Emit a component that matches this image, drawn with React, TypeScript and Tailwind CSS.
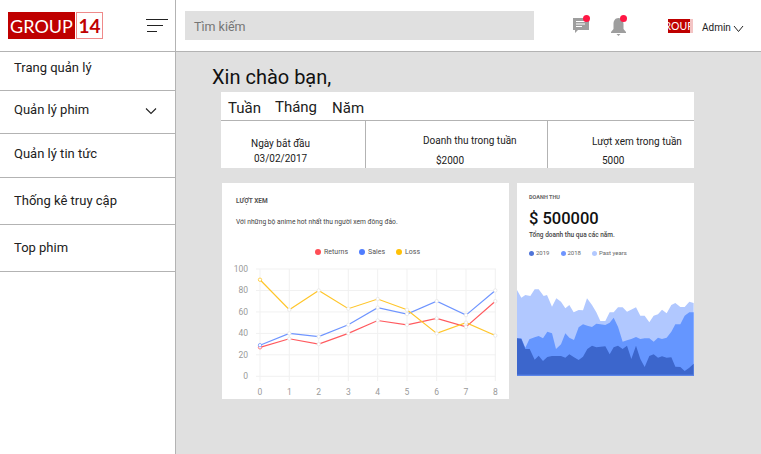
const light = "15,45 28,68 40,60 55,63 68,43 80,43 95,63 105,60 120,95 133,70 147,80 160,100 172,90 185,112 200,105 213,106 225,70 240,90 253,112 265,138 280,138 293,112 305,112 318,97 332,97 345,110 372,97 385,122 398,122 412,142 425,122 438,118 450,104 464,115 478,90 490,84 505,96 518,96 532,80 545,84";
const mid = "15,190 28,190 40,218 52,193 68,187 80,183 93,190 106,170 120,175 132,222 147,208 160,175 172,188 186,195 200,157 213,148 226,152 240,156 253,146 265,148 280,150 293,143 305,128 318,155 332,200 345,196 358,192 372,186 385,192 398,190 412,190 425,200 438,188 450,192 464,188 478,170 490,148 505,148 518,122 532,112 545,112";
const dark = "15,190 28,192 40,222 53,222 68,254 80,242 93,258 106,246 120,243 147,243 160,248 172,238 186,247 200,255 213,245 226,222 240,212 253,217 280,214 293,238 305,217 318,212 332,222 345,212 358,252 372,212 385,252 398,276 412,243 425,238 438,248 450,244 464,248 478,247 490,275 505,276 518,288 532,278 545,266";

const xs = [38, 67.3, 96.7, 126.3, 155.7, 185, 214.7, 244, 273.3];
const yOf = (v: number) => 109.3 - v * 1.073;
const series = [
  { c: "#ff5a5f", d: [27, 35, 30, 40, 52, 48, 54, 46, 70] },
  { c: "#6f95ff", d: [29, 40, 37, 48, 64, 58, 70, 57, 80] },
  { c: "#ffc62b", d: [90, 62, 80, 63, 72, 62, 40, 50, 38] },
];

function Logo() {
  return (
    <div className="flex h-[27px] items-stretch" style={{ fontFamily: "Lato, sans-serif" }}>
      <div className="flex w-[67px] items-center justify-center bg-[#bf0000] text-[18px] leading-none text-white">GROUP</div>
      <div className="ml-px flex w-[27px] items-center justify-center border border-[#ef8a8a] bg-white text-[19px] font-bold leading-none text-[#bf0000]">14</div>
    </div>
  );
}

function NavRow({ label, h, pt, chevron }: { label: string; h: string; pt: string; chevron?: boolean }) {
  return (
    <div className={`flex items-start justify-between border-b border-[#b3b3b3] pl-[14px] pr-[18px] text-[13px] leading-[20px] text-[#212121] ${h} ${pt}`}>
      <span>{label}</span>
      {chevron && (
        <svg width="12" height="8" viewBox="0 0 12 8" className="mt-[7px]" fill="none" stroke="#222" strokeWidth="1.1"><path d="M1 1.5 6 6.5 11 1.5" /></svg>
      )}
    </div>
  );
}

function LineChart() {
  return (
    <svg width="287" height="132" viewBox="0 0 287 132" className="block overflow-visible" style={{ fontFamily: "Roboto, sans-serif" }}>
      {[0, 20, 40, 60, 80, 100].map((v) => (
        <g key={v}>
          <line x1="34" x2="274" y1={yOf(v)} y2={yOf(v)} stroke="#f1f1f1" />
          <text x="26" y={yOf(v) + 3} fontSize="8.5" fill="#9a9a9a" textAnchor="end">{v}</text>
        </g>
      ))}
      {xs.map((x, i) => (
        <g key={i}>
          <line x1={x} x2={x} y1="2" y2="114" stroke="#f1f1f1" />
          <text x={x} y="128" fontSize="8.5" fill="#9a9a9a" textAnchor="middle">{i}</text>
        </g>
      ))}
      {series.map((s) => (
        <g key={s.c}>
          <polyline points={s.d.map((v, i) => `${xs[i]},${yOf(v)}`).join(" ")} fill="none" stroke={s.c} strokeWidth="1.2" />
          {s.d.map((v, i) => (
            <circle key={i} cx={xs[i]} cy={yOf(v)} r="1.7" fill="#fff" stroke={i === 0 ? s.c : "#e6e6e6"} strokeWidth="0.8" />
          ))}
        </g>
      ))}
    </svg>
  );
}

function Legend({ c, t, gap, dot }: { c: string; t: string; gap: string; dot: string }) {
  return (
    <span className={`flex items-center ${gap}`}>
      <span className={`rounded-full ${dot}`} style={{ background: c }} />
      <span>{t}</span>
    </span>
  );
}

export default function App() {
  return (
    <div className="flex h-[454px] w-[761px] overflow-hidden bg-white" style={{ fontFamily: "Roboto, sans-serif" }}>
      <aside className="h-full w-[176px] shrink-0 border-r border-[#b3b3b3] bg-white">
        <div className="flex h-[52px] items-center justify-between border-b border-[#b3b3b3] pl-2 pr-[7px]">
          <Logo />
          <svg width="22" height="14" viewBox="0 0 22 14" fill="none" stroke="#222" strokeWidth="1"><path d="M0 .5H22M1 6.5H17M1 12.5H11" /></svg>
        </div>
        <NavRow label="Trang quản lý" h="h-[39px]" pt="pt-[6px]" />
        <NavRow label="Quản lý phim" h="h-[43px]" pt="pt-[9px]" chevron />
        <NavRow label="Quản lý tin tức" h="h-[44px]" pt="pt-[10px]" />
        <NavRow label="Thống kê truy cập" h="h-[47px]" pt="pt-[13px]" />
        <NavRow label="Top phim" h="h-[47px]" pt="pt-[13px]" />
      </aside>
      <div className="flex min-w-0 flex-1 flex-col">
        <header className="flex h-[52px] shrink-0 items-start border-b border-[#b3b3b3] bg-white pl-[9px]">
          <div className="mt-[11px] flex h-[29px] w-[349px] items-center bg-[#e0e0e0] pl-[9px] pt-[3px] text-[12.5px] text-[#757575]">Tìm kiếm</div>
          <div className="relative ml-[38px] mt-[17px] h-[17px] w-[18px]">
            <svg width="18" height="17" viewBox="0 0 18 17"><path d="M1 1H17V13H6L3 16V13H1Z" fill="#9e9e9e" /><path d="M4 4.5H13M4 7H13M4 9.5H10" stroke="#fff" strokeWidth="1" /></svg>
            <span className="absolute right-0 -top-[2px] h-[7px] w-[7px] rounded-full bg-[#ff1744]" />
          </div>
          <div className="relative ml-[20px] mt-[17px] h-[19px] w-[17px]">
            <svg width="17" height="19" viewBox="0 0 17 19" fill="#9e9e9e"><path d="M8.5 1C5 1 3.5 4 3.5 7V12L1 15V16H16V15L13.5 12V7C13.5 4 12 1 8.5 1Z" /><path d="M6.5 17H10.5L8.5 19Z" /></svg>
            <span className="absolute right-0 -top-[2px] h-[7px] w-[7px] rounded-full bg-[#ff1744]" />
          </div>
          <div className="ml-[41px] mt-[19px] flex h-[14px] w-[25px] items-center justify-center overflow-hidden border-r-[3px] border-[#f3c4c4] bg-[#bf0000] text-[10.5px] leading-none text-white" style={{ fontFamily: "Lato, sans-serif" }}>ROUP</div>
          <div className="ml-[9px] mt-[21px] text-[10px] leading-[14px] text-[#212121]">Admin</div>
          <svg width="11" height="8" viewBox="0 0 11 8" className="ml-[2px] mt-[25px]" fill="none" stroke="#222" strokeWidth="1"><path d="M1 1 5.5 6.5 10 1" /></svg>
        </header>
        <main className="min-h-0 flex-1 bg-[#e0e0e0] pl-[45px]">
          <div className="ml-[-9px] mt-[12px] h-[28px] text-[20px] leading-[26px] text-[#111]">Xin chào bạn,</div>
          <section className="w-[473px] bg-white">
            <div className="flex h-[29px] items-center gap-[14px] border-b border-[#b3b3b3] pl-[7px] pt-[5px] text-[15px] text-[#212121]">
              <span>Tuần</span>
              <span className="mb-[2px]">Tháng</span>
              <span className="ml-px">Năm</span>
            </div>
            <div className="flex h-[47px] text-[10px] leading-[15px] text-[#212121]">
              <div className="w-[145px] border-r border-[#b3b3b3] pl-[30px] pt-[15px]">
                <div>Ngày bắt đầu</div>
                <div className="pl-[3px]">03/02/2017</div>
              </div>
              <div className="w-[182px] border-r border-[#b3b3b3] pt-[12px]">
                <div className="pl-[57px]">Doanh thu trong tuần</div>
                <div className="pl-[70px] pt-[5px]">$2000</div>
              </div>
              <div className="flex-1 pt-[13px]">
                <div className="pl-[44px]">Lượt xem trong tuần</div>
                <div className="pl-[54px] pt-[4px]">5000</div>
              </div>
            </div>
          </section>
          <div className="mt-[15px] ml-px flex items-start gap-[8px]">
            <section className="h-[216px] w-[287px] bg-white">
              <div className="pl-[14px] pt-[13px] text-[6.5px] font-bold leading-[10px] text-[#555]">LƯỢT XEM</div>
              <div className="pl-[14px] pt-[10px] text-[6.7px] leading-[12px] text-[#444]">Với những bộ anime hot nhất thu người xem đông đảo.</div>
              <div className="mt-[19px] flex h-[10px] items-center justify-center gap-[11px] pl-[4px] text-[7px] text-[#555]">
                <Legend c="#ff4d55" t="Returns" gap="gap-[3px]" dot="h-[6px] w-[6px]" />
                <Legend c="#4f7dff" t="Sales" gap="gap-[3px]" dot="h-[6px] w-[6px]" />
                <Legend c="#ffc107" t="Loss" gap="gap-[3px]" dot="h-[6px] w-[6px]" />
              </div>
              <div className="mt-[10px]"><LineChart /></div>
            </section>
            <section className="h-[193px] w-[177px] overflow-hidden bg-white">
              <div className="pl-[12px] pt-[9px] text-[5.5px] font-bold leading-[10px] text-[#666]">DOANH THU</div>
              <div className="pl-[12px] pt-[6px] text-[16.5px] font-medium leading-[22px] text-[#111]">$ 500000</div>
              <div className="pl-[12px] text-[6.5px] font-medium leading-[10px] text-[#444]">Tổng doanh thu qua các năm.</div>
              <div className="flex gap-[11px] pl-[12px] pt-[8px] text-[6px] leading-[10px] text-[#666]">
                <Legend c="#4f74d8" t="2019" gap="gap-[2px]" dot="h-[5px] w-[5px]" />
                <Legend c="#6f95ff" t="2018" gap="gap-[2px]" dot="h-[5px] w-[5px]" />
                <Legend c="#b3c9ff" t="Past years" gap="gap-[2px]" dot="h-[5px] w-[5px]" />
              </div>
              <svg width="177" height="101" viewBox="15 0 531 303" preserveAspectRatio="none" className="mt-[17px] block">
                <polygon points={`${light} 545,303 15,303`} fill="#b1c8ff" />
                <polygon points={`${mid} 545,303 15,303`} fill="#6596ff" />
                <polygon points={`${dark} 545,303 15,303`} fill="#3c66cc" />
                <rect x="15" y="299" width="531" height="4" fill="#5c85e8" />
              </svg>
            </section>
          </div>
        </main>
      </div>
    </div>
  );
}
